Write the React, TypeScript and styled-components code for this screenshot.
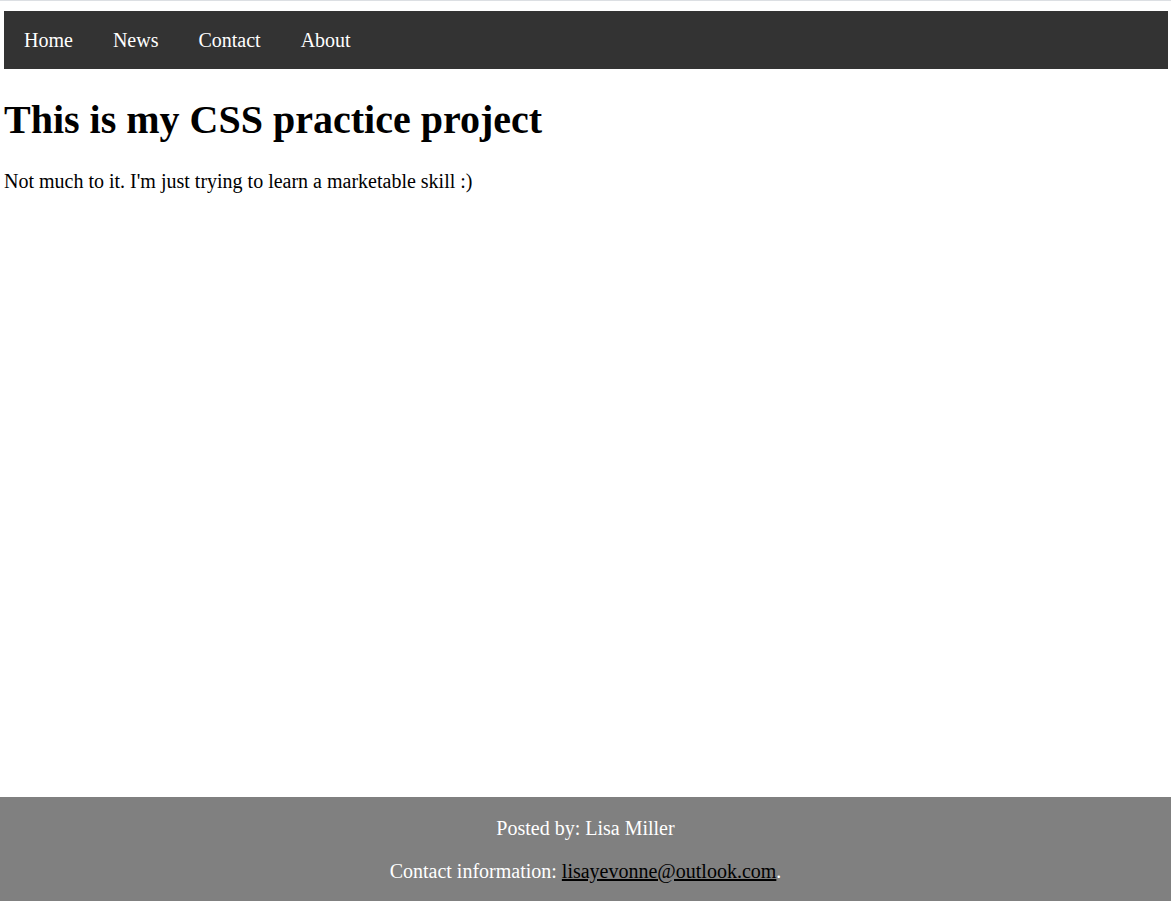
import React from "react";
import styled, { createGlobalStyle } from "styled-components";

const GlobalStyle = createGlobalStyle`
  html, body {
    margin: 0;
    padding: 0;
    background: #ffffff;
  }
  body {
    font-family: "Liberation Serif", "Times New Roman", serif;
    color: #000000;
  }
  * {
    box-sizing: border-box;
  }
`;

const Page = styled.div`
  min-height: 100vh;
  display: flex;
  flex-direction: column;
  border-top: 1px solid #dcdfe3;
`;

const NavBar = styled.nav`
  margin: 10px 3px 0 4px;
  height: 58px;
  background: #333333;
  display: flex;
  align-items: stretch;
`;

const NavLink = styled.a`
  display: flex;
  align-items: center;
  padding: 0 20px;
  color: #ffffff;
  font-size: 20px;
  text-decoration: none;
`;

const Main = styled.main`
  flex: 1;
  padding: 0 4px;
  display: flow-root;
`;

const Title = styled.h1`
  font-size: 40px;
  font-weight: bold;
  margin: 27px 0;
`;

const Text = styled.p`
  font-size: 20px;
  margin: 20px 0;
`;

const Footer = styled.footer`
  background: #808080;
  color: #ffffff;
  text-align: center;
  padding: 20px 0 19px;
`;

const FooterLine = styled.p`
  font-size: 20px;
  line-height: 22px;
  margin: 0;
  & + & {
    margin-top: 21px;
  }
`;

const MailLink = styled.a`
  color: #000000;
  text-decoration: underline;
`;

export default function App() {
  return (
    <>
      <GlobalStyle />
      <Page>
        <NavBar>
          <NavLink href="#">Home</NavLink>
          <NavLink href="#">News</NavLink>
          <NavLink href="#">Contact</NavLink>
          <NavLink href="#">About</NavLink>
        </NavBar>
        <Main>
          <Title>This is my CSS practice project</Title>
          <Text>Not much to it. I'm just trying to learn a marketable skill :)</Text>
        </Main>
        <Footer>
          <FooterLine>Posted by: Lisa Miller</FooterLine>
          <FooterLine>
            Contact information:{" "}
            <MailLink href="#">lisayevonne@outlook.com</MailLink>.
          </FooterLine>
        </Footer>
      </Page>
    </>
  );
}
